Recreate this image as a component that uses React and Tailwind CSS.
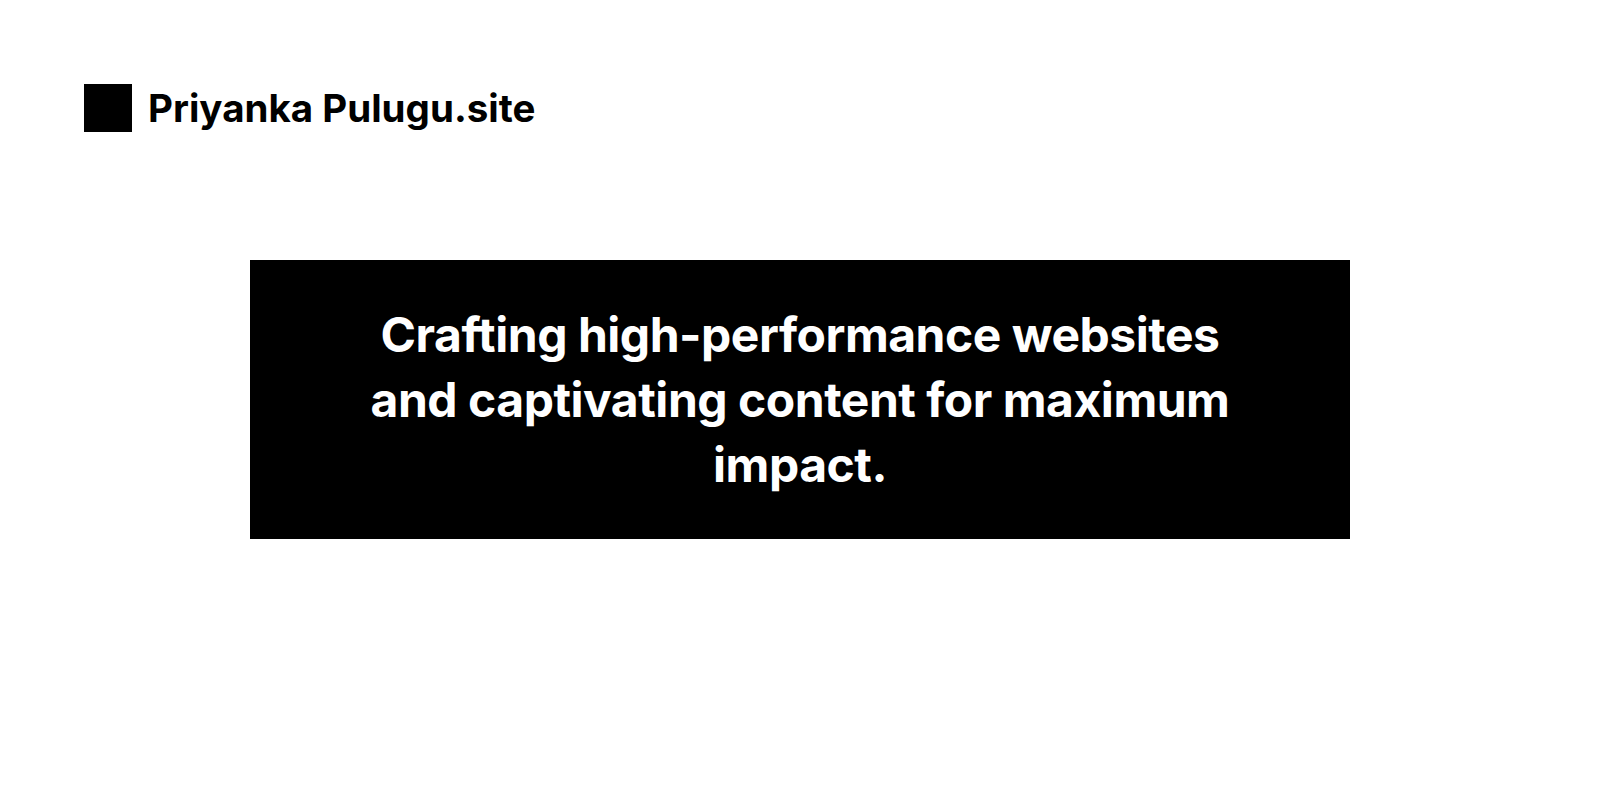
import React from 'react';

const App = () => {
    return (
        <div className="min-h-screen bg-white font-['Inter',sans-serif] text-black">
            <header className="flex items-center gap-4 px-[84px] pt-[84px] h-[132px]">
                <div className="w-12 h-12 bg-black shrink-0" />
                <span className="text-[38.5px] leading-none font-bold">Priyanka Pulugu.site</span>
            </header>

            <main className="mt-[128px] flex justify-center">
                <div className="w-[1100px] h-[279px] bg-black flex items-center justify-center">
                    <h1 className="max-w-[880px] text-center text-white text-[48px] leading-[65px] font-bold tracking-[-0.01em]">
                        Crafting high-performance websites and captivating content for maximum impact.
                    </h1>
                </div>
            </main>
        </div>
    );
};

export default App;
